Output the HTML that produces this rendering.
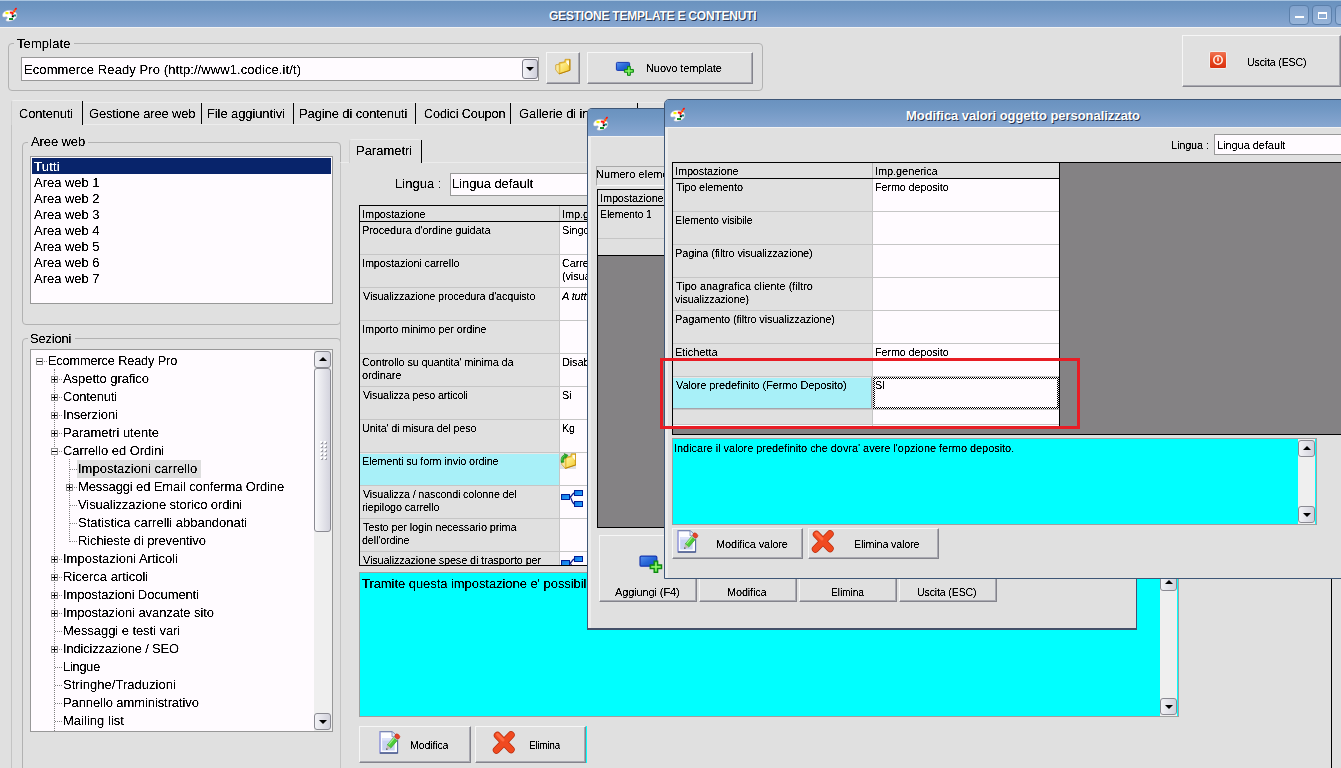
<!DOCTYPE html>
<html><head><meta charset="utf-8"><title>Gestione template e contenuti</title>
<style>
*{box-sizing:border-box;margin:0;padding:0}
html,body{width:1341px;height:768px;overflow:hidden;background:#e0e0e0}
body{font-family:"Liberation Sans",sans-serif;color:#000;position:relative;font-size:11px}
.a{position:absolute}
.x{filter:url(#th)}
.t13{font-size:13px;line-height:16px;white-space:nowrap}
.t11{font-size:11px;line-height:13px;white-space:nowrap}
.tb{background:linear-gradient(to bottom,#6a92bf 0%,#7097c3 30%,#7ea0cb 70%,#88a7d1 100%)}
.btn{position:absolute;background:#e0e0e0;border-top:1px solid #f6f6f6;border-left:1px solid #f6f6f6;border-right:1px solid #84848c;border-bottom:1px solid #84848c;box-shadow:inset -1px -1px 0 #aaaab2}
.gb{position:absolute;border:1px solid #b2b2b2;border-radius:4px}
.gbl{position:absolute;background:#e0e0e0;padding:0 3px;font-size:13px;line-height:16px;white-space:nowrap}
.fld{position:absolute;background:#fffbff;border:1px solid #989898}
.grid{position:absolute;background:#fffbff;overflow:hidden}
.cell{position:absolute;font-size:11px;line-height:13px;white-space:nowrap;overflow:hidden}
.sbtn{position:absolute;width:17px;height:17px;border:1px solid #8a8a92;border-radius:3px;background:linear-gradient(to right,#f2f2f6,#d2d2dc)}
.sbtn:after{content:"";position:absolute;left:4px;width:0;height:0;border-left:4px solid transparent;border-right:4px solid transparent}
.up:after{top:5px;border-bottom:4px solid #000}
.dn:after{top:6px;border-top:4px solid #000}
.trk{position:absolute;background:#efefef}
.tab{position:absolute;font-size:13px;line-height:16px;white-space:nowrap}
.tsep{position:absolute;width:1px;background:#000}
.tr{position:absolute;font-size:13px;line-height:18px;height:18px;white-space:nowrap}
.pm{position:absolute;width:7px;height:7px;border:1px solid #8c8c8c;background:#fffbff}
.pm:before{content:"";position:absolute;left:0;top:2px;width:5px;height:1px;background:#000}
.pm.p:after{content:"";position:absolute;left:2px;top:0;width:1px;height:5px;background:#000}
.dh{position:absolute;height:0;border-top:1px dotted #808080}
.dv{position:absolute;width:0;border-left:1px dotted #808080}
</style></head>
<body>
<svg width="0" height="0" style="position:absolute"><defs><filter id="th" x="0" y="0" width="100%" height="100%" color-interpolation-filters="sRGB"><feComponentTransfer><feFuncA type="linear" slope="3" intercept="-0.8"/></feComponentTransfer></filter></defs></svg>
<div class="a tb" style="left:0;top:0;width:1341px;height:27px;border-top:1px solid #a8c4e0"></div>
<div class="a" style="left:0;top:27px;width:1341px;height:1px;background:#f2f2f2"></div>
<svg class="a" style="left:1px;top:6px" width="18" height="18" viewBox="0 0 18 18">
<path d="M1.5 9.5 C1.5 6 5 4.2 9 4.4 C13.5 4.6 16 6.5 15.8 9.5 C15.6 12.5 12 15 7.5 15.2 C5 15.3 4.2 14.2 5.5 13.2 C7 12 6.5 10.6 5 10.8 C3 11.2 1.5 11 1.5 9.5 Z" fill="#ffffff" stroke="#c8c8d0" stroke-width="0.6"/>
<rect x="4.5" y="6" width="3" height="2.2" fill="#f4f000"/>
<rect x="8.8" y="5.6" width="3" height="2" fill="#ff1010"/>
<rect x="12.5" y="8.5" width="2.6" height="2" fill="#108888"/>
<rect x="8" y="12" width="4" height="2" fill="#109020"/>
<rect x="10.8" y="9.3" width="2" height="2" fill="#000"/>
<path d="M11.3 8 L15 2.6" stroke="#ff1010" stroke-width="1.8" stroke-linecap="round"/>
<path d="M12.4 6.6 L14.2 3.8" stroke="#ffe000" stroke-width="1.2" stroke-dasharray="1.2 1.2"/>
</svg>
<div class="a" style="left:549px;top:8px;font-size:12px;line-height:16px;color:#fff;white-space:nowrap;letter-spacing:-0.223px;font-weight:bold;text-shadow:1px 1px 0 #24324e;">GESTIONE TEMPLATE E CONTENUTI</div>
<div class="a" style="left:1289px;top:5px;width:20px;height:20px;border:1px solid #5c80ab;border-radius:4px;background:linear-gradient(#82a3cd,#98b5d9)"></div>
<div class="a" style="left:1312px;top:5px;width:20px;height:20px;border:1px solid #5c80ab;border-radius:4px;background:linear-gradient(#82a3cd,#98b5d9)"></div>
<div class="a" style="left:1335px;top:5px;width:20px;height:20px;border:1px solid #5c80ab;border-radius:4px;background:linear-gradient(#82a3cd,#98b5d9)"></div>
<div class="a" style="left:1295px;top:16px;width:9px;height:2px;background:#fff"></div>
<div class="a" style="left:1318px;top:12px;width:9px;height:7px;border:1px solid #fff;border-top-width:2px"></div>
<div class="gb" style="left:8px;top:43px;width:755px;height:48px"></div>
<div class="a" style="left:14px;top:40px;width:60px;height:8px;background:#e0e0e0"></div>
<div class="a x" style="left:17px;top:36px;font-size:13px;line-height:16px;white-space:nowrap;letter-spacing:0.105px;">Template</div>
<div class="fld" style="left:21px;top:57px;width:518px;height:24px"></div>
<div class="a x" style="left:24px;top:62px;font-size:13px;line-height:16px;white-space:nowrap;letter-spacing:0.088px;">Ecommerce Ready Pro (http://www1.codice.it/t)</div>
<div class="a" style="left:522px;top:59px;width:16px;height:20px;border:1px solid #7c7c88;border-radius:3px;background:linear-gradient(to right,#f4f4f8,#d0d0dc)"></div>
<div class="a" style="left:526px;top:67px;width:0;height:0;border-left:4px solid transparent;border-right:4px solid transparent;border-top:4px solid #000"></div>
<div class="btn" style="left:546px;top:52px;width:34px;height:32px"></div>
<svg class="a" style="left:554px;top:58px" width="17" height="17" viewBox="0 0 17 17">
<defs><linearGradient id="fg" x1="0" y1="0" x2="1" y2="1"><stop offset="0" stop-color="#fff4a0"/><stop offset="1" stop-color="#f4cc30"/></linearGradient></defs>
<path d="M11.1 1.3 L15.9 1.3 L15.9 12.3 L5.2 15.9 L1.9 11.9 L1.9 6.9 L4.8 6.5 L5.2 4.8 L10.7 3.8 Z" fill="#f0c840" stroke="#c89418" stroke-width="0.7"/>
<path d="M12.3 2.5 L15.0 2.5 L15.0 7.8 L13.6 6.5 L12.3 4.8 Z" fill="#fffbe8"/>
<path d="M6.5 6.1 L11.9 4.8 L13.6 6.5 L14.8 12.3 L6.5 14.8 Z" fill="url(#fg)"/>
<path d="M1.9 6.9 L1.9 11.9 L5.2 15.9 L5.2 6.5 Z" fill="#f8e8a0" stroke="#c89418" stroke-width="0.4"/>
<path d="M15.9 1.3 L15.9 12.3 L5.2 15.9" fill="none" stroke="#b88208" stroke-width="1"/>
</svg>
<div class="btn" style="left:587px;top:52px;width:166px;height:32px"></div>
<svg class="a" style="left:614px;top:60px" width="21" height="17" viewBox="0 0 21 17">
<defs><linearGradient id="bg614" x1="0" y1="0" x2="1" y2="1"><stop offset="0" stop-color="#5c94f0"/><stop offset="0.5" stop-color="#2868d8"/><stop offset="1" stop-color="#1450c8"/></linearGradient></defs>
<rect x="2.4" y="2.4" width="13.2" height="8" rx="1" fill="url(#bg614)" stroke="#1838b0" stroke-width="1"/>
<path d="M13.5 6.35 h2.8 v3.1 h3.1 v2.8 h-3.1 v3.1 h-2.8 v-3.1 h-3.1 v-2.8 h3.1 z" fill="#44cc34" stroke="#0c8810" stroke-width="1"/>
<path d="M14.4 7.4 h1 v3 h3 v1 h-3 v3 h-1 v-3 h-3 v-1 h3 z" fill="#98f870"/>
</svg>
<div class="a x" style="left:646px;top:62px;font-size:11px;line-height:13px;white-space:nowrap;letter-spacing:-0.084px;">Nuovo template</div>
<div class="btn" style="left:1182px;top:35px;width:159px;height:52px"></div>
<svg class="a" style="left:1209px;top:51px" width="18" height="18" viewBox="0 0 18 18">
<defs><linearGradient id="rg" x1="0" y1="0" x2="0" y2="1"><stop offset="0" stop-color="#f07858"/><stop offset="0.5" stop-color="#e84820"/><stop offset="1" stop-color="#d83010"/></linearGradient></defs>
<rect x="0.5" y="0.5" width="17" height="17" rx="1.5" fill="url(#rg)" stroke="#f0f0f0" stroke-width="1"/>
<circle cx="9" cy="9" r="4.2" fill="none" stroke="#fff0e8" stroke-width="1.6"/>
<rect x="8.3" y="6.3" width="1.4" height="4" fill="#fff"/>
</svg>
<div class="a x" style="left:1247px;top:56px;font-size:11px;line-height:13px;white-space:nowrap;letter-spacing:-0.150px;transform:scaleX(0.9610);transform-origin:0 0;">Uscita (ESC)</div>
<div class="a" style="left:11px;top:124px;width:1330px;height:700px;border-left:1px solid #c4c4c4;border-top:1px solid #ececec"></div>
<div class="a" style="left:11px;top:100px;width:71px;height:25px;background:#e0e0e0;border-left:1px solid #d0d0d0;border-top:1px solid #ececec;border-radius:3px 3px 0 0"></div>
<div class="tsep" style="left:82px;top:101px;height:24px"></div>
<div class="a x" style="left:19px;top:106px;font-size:13px;line-height:16px;white-space:nowrap;letter-spacing:-0.150px;transform:scaleX(0.9959);transform-origin:0 0;">Contenuti</div>
<div class="a x" style="left:89px;top:106px;font-size:13px;line-height:16px;white-space:nowrap;letter-spacing:-0.150px;transform:scaleX(0.9976);transform-origin:0 0;">Gestione aree web</div>
<div class="a x" style="left:207px;top:106px;font-size:13px;line-height:16px;white-space:nowrap;letter-spacing:-0.108px;">File aggiuntivi</div>
<div class="a x" style="left:299px;top:106px;font-size:13px;line-height:16px;white-space:nowrap;letter-spacing:-0.118px;">Pagine di contenuti</div>
<div class="a x" style="left:424px;top:106px;font-size:13px;line-height:16px;white-space:nowrap;letter-spacing:-0.150px;transform:scaleX(0.9759);transform-origin:0 0;">Codici Coupon</div>
<div class="a x" style="left:519px;top:106px;font-size:13px;line-height:16px;white-space:nowrap;letter-spacing:-0.141px;">Gallerie di immagini</div>
<div class="tsep" style="left:201px;top:103px;height:21px"></div>
<div class="tsep" style="left:293px;top:103px;height:21px"></div>
<div class="tsep" style="left:415px;top:103px;height:21px"></div>
<div class="tsep" style="left:510px;top:103px;height:21px"></div>
<div class="tsep" style="left:637px;top:103px;height:21px"></div>
<div class="a" style="left:83px;top:102px;width:600px;height:1px;background:#ececec"></div>
<div class="gb" style="left:22px;top:142px;width:319px;height:183px"></div>
<div class="a" style="left:28px;top:139px;width:60px;height:8px;background:#e0e0e0"></div>
<div class="a x" style="left:31px;top:134px;font-size:13px;line-height:16px;white-space:nowrap;letter-spacing:-0.105px;">Aree web</div>
<div class="fld" style="left:30px;top:156px;width:303px;height:148px"></div>
<div class="a" style="left:32px;top:158px;width:299px;height:16px;background:#08246b"></div>
<div class="a x" style="left:34px;top:159px;font-size:13px;line-height:16px;white-space:nowrap;letter-spacing:0.238px;color:#fff;">Tutti</div>
<div class="a x" style="left:34px;top:175px;font-size:13px;line-height:16px;white-space:nowrap;letter-spacing:-0.031px;">Area web 1</div>
<div class="a x" style="left:34px;top:191px;font-size:13px;line-height:16px;white-space:nowrap;letter-spacing:-0.031px;">Area web 2</div>
<div class="a x" style="left:34px;top:207px;font-size:13px;line-height:16px;white-space:nowrap;letter-spacing:-0.031px;">Area web 3</div>
<div class="a x" style="left:34px;top:223px;font-size:13px;line-height:16px;white-space:nowrap;letter-spacing:-0.031px;">Area web 4</div>
<div class="a x" style="left:34px;top:239px;font-size:13px;line-height:16px;white-space:nowrap;letter-spacing:-0.031px;">Area web 5</div>
<div class="a x" style="left:34px;top:255px;font-size:13px;line-height:16px;white-space:nowrap;letter-spacing:-0.031px;">Area web 6</div>
<div class="a x" style="left:34px;top:271px;font-size:13px;line-height:16px;white-space:nowrap;letter-spacing:-0.031px;">Area web 7</div>
<div class="gb" style="left:22px;top:338px;width:319px;height:450px"></div>
<div class="a" style="left:28px;top:335px;width:47px;height:8px;background:#e0e0e0"></div>
<div class="a x" style="left:30px;top:331px;font-size:13px;line-height:16px;white-space:nowrap;letter-spacing:-0.150px;transform:scaleX(0.9879);transform-origin:0 0;">Sezioni</div>
<div class="fld" style="left:30px;top:349px;width:303px;height:383px"></div>
<div class="trk" style="left:314px;top:350px;width:18px;height:381px"></div>
<div class="sbtn up" style="left:314px;top:351px"></div>
<div class="sbtn dn" style="left:314px;top:713px"></div>
<div class="a" style="left:314px;top:368px;width:17px;height:164px;border:1px solid #8a8a92;border-radius:3px;background:linear-gradient(to right,#f8f8fa,#d4d4de)"></div>
<div class="a" style="left:320px;top:441px;width:2px;height:2px;background:#fff;box-shadow:1px 1px 0 #a0a0a8"></div><div class="a" style="left:324px;top:441px;width:2px;height:2px;background:#fff;box-shadow:1px 1px 0 #a0a0a8"></div>
<div class="a" style="left:320px;top:445px;width:2px;height:2px;background:#fff;box-shadow:1px 1px 0 #a0a0a8"></div><div class="a" style="left:324px;top:445px;width:2px;height:2px;background:#fff;box-shadow:1px 1px 0 #a0a0a8"></div>
<div class="a" style="left:320px;top:449px;width:2px;height:2px;background:#fff;box-shadow:1px 1px 0 #a0a0a8"></div><div class="a" style="left:324px;top:449px;width:2px;height:2px;background:#fff;box-shadow:1px 1px 0 #a0a0a8"></div>
<div class="a" style="left:320px;top:453px;width:2px;height:2px;background:#fff;box-shadow:1px 1px 0 #a0a0a8"></div><div class="a" style="left:324px;top:453px;width:2px;height:2px;background:#fff;box-shadow:1px 1px 0 #a0a0a8"></div>
<div class="a" style="left:320px;top:457px;width:2px;height:2px;background:#fff;box-shadow:1px 1px 0 #a0a0a8"></div><div class="a" style="left:324px;top:457px;width:2px;height:2px;background:#fff;box-shadow:1px 1px 0 #a0a0a8"></div>
<div class="dv" style="left:54px;top:369px;height:362px"></div>
<div class="dv" style="left:69px;top:459px;height:83px"></div>
<div class="dh" style="left:40px;top:361px;width:7px"></div>
<div class="pm " style="left:36px;top:358px"></div>
<div class="a x" style="left:48px;top:353px;font-size:13px;line-height:16px;white-space:nowrap;letter-spacing:-0.150px;transform:scaleX(0.9814);transform-origin:0 0;">Ecommerce Ready Pro</div>
<div class="dh" style="left:55px;top:379px;width:7px"></div>
<div class="pm p" style="left:51px;top:376px"></div>
<div class="a x" style="left:63px;top:371px;font-size:13px;line-height:16px;white-space:nowrap;letter-spacing:-0.052px;">Aspetto grafico</div>
<div class="dh" style="left:55px;top:397px;width:7px"></div>
<div class="pm p" style="left:51px;top:394px"></div>
<div class="a x" style="left:63px;top:389px;font-size:13px;line-height:16px;white-space:nowrap;letter-spacing:-0.150px;transform:scaleX(0.9959);transform-origin:0 0;">Contenuti</div>
<div class="dh" style="left:55px;top:415px;width:7px"></div>
<div class="pm p" style="left:51px;top:412px"></div>
<div class="a x" style="left:63px;top:407px;font-size:13px;line-height:16px;white-space:nowrap;letter-spacing:-0.073px;">Inserzioni</div>
<div class="dh" style="left:55px;top:433px;width:7px"></div>
<div class="pm p" style="left:51px;top:430px"></div>
<div class="a x" style="left:63px;top:425px;font-size:13px;line-height:16px;white-space:nowrap;letter-spacing:-0.008px;">Parametri utente</div>
<div class="dh" style="left:55px;top:451px;width:7px"></div>
<div class="pm " style="left:51px;top:448px"></div>
<div class="a x" style="left:63px;top:443px;font-size:13px;line-height:16px;white-space:nowrap;letter-spacing:-0.039px;">Carrello ed Ordini</div>
<div class="a" style="left:77px;top:460px;width:124px;height:18px;background:#dedede"></div>
<div class="dh" style="left:70px;top:469px;width:7px"></div>
<div class="a x" style="left:78px;top:461px;font-size:13px;line-height:16px;white-space:nowrap;letter-spacing:0.000px;">Impostazioni carrello</div>
<div class="dh" style="left:70px;top:487px;width:7px"></div>
<div class="pm p" style="left:66px;top:484px"></div>
<div class="a x" style="left:78px;top:479px;font-size:13px;line-height:16px;white-space:nowrap;letter-spacing:-0.127px;">Messaggi ed Email conferma Ordine</div>
<div class="dh" style="left:70px;top:505px;width:7px"></div>
<div class="a x" style="left:78px;top:497px;font-size:13px;line-height:16px;white-space:nowrap;letter-spacing:-0.086px;">Visualizzazione storico ordini</div>
<div class="dh" style="left:70px;top:523px;width:7px"></div>
<div class="a x" style="left:78px;top:515px;font-size:13px;line-height:16px;white-space:nowrap;letter-spacing:-0.021px;">Statistica carrelli abbandonati</div>
<div class="dh" style="left:70px;top:541px;width:7px"></div>
<div class="a x" style="left:78px;top:533px;font-size:13px;line-height:16px;white-space:nowrap;letter-spacing:-0.129px;">Richieste di preventivo</div>
<div class="dh" style="left:55px;top:559px;width:7px"></div>
<div class="pm p" style="left:51px;top:556px"></div>
<div class="a x" style="left:63px;top:551px;font-size:13px;line-height:16px;white-space:nowrap;letter-spacing:0.005px;">Impostazioni Articoli</div>
<div class="dh" style="left:55px;top:577px;width:7px"></div>
<div class="pm p" style="left:51px;top:574px"></div>
<div class="a x" style="left:63px;top:569px;font-size:13px;line-height:16px;white-space:nowrap;letter-spacing:-0.004px;">Ricerca articoli</div>
<div class="dh" style="left:55px;top:595px;width:7px"></div>
<div class="pm p" style="left:51px;top:592px"></div>
<div class="a x" style="left:63px;top:587px;font-size:13px;line-height:16px;white-space:nowrap;letter-spacing:-0.132px;">Impostazioni Documenti</div>
<div class="dh" style="left:55px;top:613px;width:7px"></div>
<div class="pm p" style="left:51px;top:610px"></div>
<div class="a x" style="left:63px;top:605px;font-size:13px;line-height:16px;white-space:nowrap;letter-spacing:-0.089px;">Impostazioni avanzate sito</div>
<div class="dh" style="left:55px;top:631px;width:7px"></div>
<div class="a x" style="left:63px;top:623px;font-size:13px;line-height:16px;white-space:nowrap;letter-spacing:-0.063px;">Messaggi e testi vari</div>
<div class="dh" style="left:55px;top:649px;width:7px"></div>
<div class="pm p" style="left:51px;top:646px"></div>
<div class="a x" style="left:63px;top:641px;font-size:13px;line-height:16px;white-space:nowrap;letter-spacing:-0.150px;transform:scaleX(0.9904);transform-origin:0 0;">Indicizzazione / SEO</div>
<div class="dh" style="left:55px;top:667px;width:7px"></div>
<div class="a x" style="left:63px;top:659px;font-size:13px;line-height:16px;white-space:nowrap;letter-spacing:-0.150px;transform:scaleX(0.9723);transform-origin:0 0;">Lingue</div>
<div class="dh" style="left:55px;top:685px;width:7px"></div>
<div class="a x" style="left:63px;top:677px;font-size:13px;line-height:16px;white-space:nowrap;letter-spacing:0.040px;">Stringhe/Traduzioni</div>
<div class="dh" style="left:55px;top:703px;width:7px"></div>
<div class="a x" style="left:63px;top:695px;font-size:13px;line-height:16px;white-space:nowrap;letter-spacing:-0.093px;">Pannello amministrativo</div>
<div class="dh" style="left:55px;top:721px;width:7px"></div>
<div class="a x" style="left:63px;top:713px;font-size:13px;line-height:16px;white-space:nowrap;letter-spacing:0.027px;">Mailing list</div>
<div class="a" style="left:340px;top:162px;width:1001px;height:620px;border-left:1px solid #c4c4c4;border-top:1px solid #ececec"></div>
<div class="a" style="left:349px;top:139px;width:72px;height:24px;background:#e0e0e0;border-left:1px solid #d0d0d0;border-top:1px solid #ececec;border-radius:3px 3px 0 0"></div>
<div class="tsep" style="left:421px;top:140px;height:23px"></div>
<div class="a x" style="left:356px;top:143px;font-size:13px;line-height:16px;white-space:nowrap;letter-spacing:-0.014px;">Parametri</div>
<div class="a x" style="left:395px;top:176px;font-size:13px;line-height:16px;white-space:nowrap;letter-spacing:0.031px;">Lingua :</div>
<div class="fld" style="left:450px;top:173px;width:400px;height:23px"></div>
<div class="a x" style="left:452px;top:176px;font-size:13px;line-height:16px;white-space:nowrap;letter-spacing:-0.036px;">Lingua default</div>
<div class="grid" style="left:359px;top:205px;width:520px;height:361px;border:1px solid #000">
<div class="a" style="left:0;top:0;width:520px;height:15px;background:#e0e0e0"></div>
<div class="a" style="left:0;top:15px;width:520px;height:1px;background:#000"></div>
<div class="a x" style="left:2px;top:2px;font-size:11px;line-height:13px;white-space:nowrap;letter-spacing:-0.150px;transform:scaleX(0.9989);transform-origin:0 0;">Impostazione</div><div class="a x" style="left:202px;top:2px;font-size:11px;line-height:13px;white-space:nowrap;letter-spacing:-0.080px;">Imp.generica</div>
<div class="a" style="left:199px;top:0;width:1px;height:15px;background:#b8b8b8"></div>
<div class="a" style="left:0;top:16px;width:199px;height:32px;background:#e0e0e0"></div>
<div class="a" style="left:0;top:48px;width:520px;height:1px;background:#c6c6c6"></div>
<div class="a x" style="left:2px;top:18px;font-size:11px;line-height:13px;white-space:nowrap;letter-spacing:-0.124px;">Procedura d'ordine guidata</div>
<div class="a x" style="left:202px;top:18px;font-size:11px;line-height:13px;white-space:nowrap;letter-spacing:-0.150px;transform:scaleX(0.9967);transform-origin:0 0;">Singola pagina</div>
<div class="a" style="left:0;top:49px;width:199px;height:32px;background:#e0e0e0"></div>
<div class="a" style="left:0;top:81px;width:520px;height:1px;background:#c6c6c6"></div>
<div class="a x" style="left:2px;top:51px;font-size:11px;line-height:13px;white-space:nowrap;letter-spacing:-0.150px;transform:scaleX(0.9959);transform-origin:0 0;">Impostazioni carrello</div>
<div class="a x" style="left:202px;top:51px;font-size:11px;line-height:13px;white-space:nowrap;letter-spacing:-0.150px;transform:scaleX(0.9972);transform-origin:0 0;">Carrello</div><div class="a x" style="left:202px;top:64px;font-size:11px;line-height:13px;white-space:nowrap;letter-spacing:-0.150px;transform:scaleX(0.9992);transform-origin:0 0;">(visualizza</div>
<div class="a" style="left:0;top:82px;width:199px;height:32px;background:#e0e0e0"></div>
<div class="a" style="left:0;top:114px;width:520px;height:1px;background:#c6c6c6"></div>
<div class="a x" style="left:3px;top:84px;font-size:11px;line-height:13px;white-space:nowrap;letter-spacing:-0.150px;transform:scaleX(0.9840);transform-origin:0 0;">Visualizzazione procedura d'acquisto</div>
<div class="a x" style="left:202px;top:84px;font-size:11px;line-height:13px;white-space:nowrap;letter-spacing:-0.139px;"><i>A tutti</i></div>
<div class="a" style="left:0;top:115px;width:199px;height:32px;background:#e0e0e0"></div>
<div class="a" style="left:0;top:147px;width:520px;height:1px;background:#c6c6c6"></div>
<div class="a x" style="left:2px;top:117px;font-size:11px;line-height:13px;white-space:nowrap;letter-spacing:-0.150px;transform:scaleX(0.9973);transform-origin:0 0;">Importo minimo per ordine</div>
<div class="a" style="left:0;top:148px;width:199px;height:32px;background:#e0e0e0"></div>
<div class="a" style="left:0;top:180px;width:520px;height:1px;background:#c6c6c6"></div>
<div class="a x" style="left:2px;top:150px;font-size:11px;line-height:13px;white-space:nowrap;letter-spacing:-0.150px;transform:scaleX(0.9969);transform-origin:0 0;">Controllo su quantita' minima da</div><div class="a x" style="left:2px;top:163px;font-size:11px;line-height:13px;white-space:nowrap;letter-spacing:-0.125px;">ordinare</div>
<div class="a x" style="left:202px;top:150px;font-size:11px;line-height:13px;white-space:nowrap;letter-spacing:-0.147px;">Disabilitato</div>
<div class="a" style="left:0;top:181px;width:199px;height:32px;background:#e0e0e0"></div>
<div class="a" style="left:0;top:213px;width:520px;height:1px;background:#c6c6c6"></div>
<div class="a x" style="left:3px;top:183px;font-size:11px;line-height:13px;white-space:nowrap;letter-spacing:-0.150px;transform:scaleX(0.9753);transform-origin:0 0;">Visualizza peso articoli</div>
<div class="a x" style="left:202px;top:183px;font-size:11px;line-height:13px;white-space:nowrap;letter-spacing:-0.150px;transform:scaleX(0.9851);transform-origin:0 0;">Si</div>
<div class="a" style="left:0;top:214px;width:199px;height:32px;background:#e0e0e0"></div>
<div class="a" style="left:0;top:246px;width:520px;height:1px;background:#c6c6c6"></div>
<div class="a x" style="left:2px;top:216px;font-size:11px;line-height:13px;white-space:nowrap;letter-spacing:-0.150px;transform:scaleX(0.9824);transform-origin:0 0;">Unita' di misura del peso</div>
<div class="a x" style="left:202px;top:216px;font-size:11px;line-height:13px;white-space:nowrap;letter-spacing:-0.150px;transform:scaleX(0.9809);transform-origin:0 0;">Kg</div>
<div class="a" style="left:0;top:247px;width:199px;height:32px;background:#a8f0f8"></div>
<div class="a" style="left:0;top:247px;width:199px;height:1px;background:#e8e8e8"></div>
<div class="a" style="left:0;top:279px;width:520px;height:1px;background:#c6c6c6"></div>
<div class="a x" style="left:2px;top:249px;font-size:11px;line-height:13px;white-space:nowrap;letter-spacing:-0.150px;transform:scaleX(0.9931);transform-origin:0 0;">Elementi su form invio ordine</div>
<svg class="a" style="left:200px;top:247px" width="16" height="16" viewBox="0 0 16 16">
<rect width="16" height="16" fill="#e0e0e0"/>
<path d="M11.2 0.8 L16.0 0.8 L16.0 11.8 L5.3 15.4 L2.0 11.4 L2.0 6.4 L4.9 6.0 L5.3 4.3 L10.8 3.3 Z" fill="#f0c840" stroke="#c89418" stroke-width="0.7"/>
<path d="M12.4 2.0 L15.1 2.0 L15.1 7.2 L13.7 6.0 L12.4 4.3 Z" fill="#fffbe8"/>
<path d="M6.6 5.6 L12.0 4.3 L13.7 6.0 L14.9 11.8 L6.6 14.3 Z" fill="url(#fg)"/>
<path d="M2.0 6.4 L2.0 11.4 L5.3 15.4 L5.3 6.0 Z" fill="#f8e8a0" stroke="#c89418" stroke-width="0.4"/>
<path d="M16.0 0.8 L16.0 11.8 L5.3 15.4" fill="none" stroke="#b88208" stroke-width="1"/>
<path d="M1.2 9.5 C0.4 5.5 1.8 2.8 4.6 1.8 L4.2 0.6 L8 2.2 L5.6 5.4 L5.2 4.2 C3.8 5 3.3 6.8 3.9 9.2 Z" fill="#28a828" stroke="#0c7c0c" stroke-width="0.5"/>
<path d="M1.8 7.5 C1.6 5 2.6 3.4 4.6 2.6" fill="none" stroke="#70e070" stroke-width="0.8"/>
</svg>
<div class="a" style="left:0;top:280px;width:199px;height:32px;background:#e0e0e0"></div>
<div class="a" style="left:0;top:312px;width:520px;height:1px;background:#c6c6c6"></div>
<div class="a x" style="left:3px;top:282px;font-size:11px;line-height:13px;white-space:nowrap;letter-spacing:-0.150px;transform:scaleX(0.9783);transform-origin:0 0;">Visualizza / nascondi colonne del</div><div class="a x" style="left:2px;top:295px;font-size:11px;line-height:13px;white-space:nowrap;letter-spacing:-0.150px;transform:scaleX(0.9914);transform-origin:0 0;">riepilogo carrello</div>
<svg class="a" style="left:201px;top:284px" width="23" height="18" viewBox="0 0 23 18">
<defs><linearGradient id="tg" x1="0" y1="0" x2="1" y2="1"><stop offset="0" stop-color="#0c70e0"/><stop offset="1" stop-color="#28a4ff"/></linearGradient></defs>
<path d="M9 7 C11 6.5 11 3.5 13.5 3 M9 7 C11 8 10.5 13.5 13.5 14" fill="none" stroke="#101c88" stroke-width="1.3"/>
<rect x="0.5" y="4.5" width="8" height="5" fill="url(#tg)" stroke="#001c94"/>
<rect x="13.5" y="0.5" width="8" height="5" fill="url(#tg)" stroke="#001c94"/>
<rect x="13.5" y="11.5" width="8" height="5" fill="url(#tg)" stroke="#001c94"/>
</svg>
<div class="a" style="left:0;top:313px;width:199px;height:32px;background:#e0e0e0"></div>
<div class="a" style="left:0;top:345px;width:520px;height:1px;background:#c6c6c6"></div>
<div class="a x" style="left:3px;top:315px;font-size:11px;line-height:13px;white-space:nowrap;letter-spacing:-0.150px;transform:scaleX(0.9998);transform-origin:0 0;">Testo per login necessario prima</div><div class="a x" style="left:2px;top:328px;font-size:11px;line-height:13px;white-space:nowrap;letter-spacing:-0.150px;transform:scaleX(0.9832);transform-origin:0 0;">dell'ordine</div>
<div class="a" style="left:0;top:346px;width:199px;height:32px;background:#e0e0e0"></div>
<div class="a" style="left:0;top:378px;width:520px;height:1px;background:#c6c6c6"></div>
<div class="a x" style="left:3px;top:348px;font-size:11px;line-height:13px;white-space:nowrap;letter-spacing:-0.150px;transform:scaleX(0.9924);transform-origin:0 0;">Visualizzazione spese di trasporto per</div>
<svg class="a" style="left:201px;top:350px" width="23" height="18" viewBox="0 0 23 18">
<defs><linearGradient id="tg" x1="0" y1="0" x2="1" y2="1"><stop offset="0" stop-color="#0c70e0"/><stop offset="1" stop-color="#28a4ff"/></linearGradient></defs>
<path d="M9 7 C11 6.5 11 3.5 13.5 3 M9 7 C11 8 10.5 13.5 13.5 14" fill="none" stroke="#101c88" stroke-width="1.3"/>
<rect x="0.5" y="4.5" width="8" height="5" fill="url(#tg)" stroke="#001c94"/>
<rect x="13.5" y="0.5" width="8" height="5" fill="url(#tg)" stroke="#001c94"/>
<rect x="13.5" y="11.5" width="8" height="5" fill="url(#tg)" stroke="#001c94"/>
</svg>
<div class="a" style="left:199px;top:16px;width:1px;height:360px;background:#c6c6c6"></div>
</div>
<div class="a" style="left:359px;top:572px;width:820px;height:145px;background:#00ffff;border:1px solid #a0a0a0"></div>
<div class="a x" style="left:362px;top:576px;font-size:13px;line-height:16px;white-space:nowrap;letter-spacing:-0.059px;">Tramite questa impostazione e' possibile</div>
<div class="trk" style="left:1160px;top:573px;width:17px;height:143px"></div>
<div class="sbtn up" style="left:1160px;top:574px"></div>
<div class="sbtn dn" style="left:1160px;top:698px"></div>
<div class="btn" style="left:359px;top:726px;width:112px;height:37px"></div>
<svg class="a" style="left:379px;top:731px" width="22" height="23" viewBox="0 0 22 23">
<path d="M1 0.8 H13 L18.6 5.8 V22 H1 Z" fill="#fdfdff" stroke="#5466a0" stroke-width="1.1"/>
<path d="M1 0.8 V22" stroke="#b0b0f0" stroke-width="1.2"/>
<path d="M1 22 H18.6" stroke="#3c4e84" stroke-width="1.2"/>
<rect x="3.2" y="7" width="12.5" height="12.5" fill="#c8d2f2"/>
<rect x="3.2" y="7" width="12.5" height="2.6" fill="#dde3fa"/>
<path d="M13 0.8 L13 5.8 L18.6 5.8" fill="#e4eafa" stroke="#7486b8" stroke-width="0.8"/>
<path d="M8.2 14.1 L14.7 6.5 L18.2 9.5 L11.7 17.1 Z" fill="#4ccc38" stroke="#2c9c1c" stroke-width="0.7"/>
<path d="M9.6 13.6 L15.4 6.9" stroke="#a4f490" stroke-width="1.3"/>
<path d="M14.7 6.5 L15.7 5.4 L19.2 8.4 L18.2 9.5 Z" fill="#b4b4bc"/>
<ellipse cx="18.3" cy="5.4" rx="2.7" ry="2.2" transform="rotate(40 18.3 5.4)" fill="#e64428" stroke="#b83018" stroke-width="0.5"/>
<path d="M8.2 14.1 L7 19 L11.7 17.1 Z" fill="#c4bcb4"/>
<path d="M7 19 L7.5 17 L9 18.2 Z" fill="#505050"/>
</svg>
<div class="a x" style="left:410px;top:739px;font-size:11px;line-height:13px;white-space:nowrap;letter-spacing:-0.150px;transform:scaleX(0.9645);transform-origin:0 0;">Modifica</div>
<div class="btn" style="left:475px;top:726px;width:111px;height:37px"></div>
<svg class="a" style="left:492px;top:731px" width="24" height="24" viewBox="0 0 24 24">
<g fill="none" stroke-linecap="round">
<path d="M5.5 4.5 L19 18.5 M19 4 L4.5 19" stroke="#b82c0c" stroke-width="7.4"/>
<path d="M5.5 4.5 L19 18.5 M19 4 L4.5 19" stroke="#f04a20" stroke-width="6"/>
<path d="M5.5 3.5 L11 9" stroke="#ff6a40" stroke-width="3"/>
</g></svg>
<div class="a x" style="left:529px;top:739px;font-size:11px;line-height:13px;white-space:nowrap;letter-spacing:-0.150px;transform:scaleX(0.8902);transform-origin:0 0;">Elimina</div>
<div class="a" style="left:586px;top:726px;width:1px;height:37px;background:#00ffff"></div>
<div class="a" style="left:1331px;top:579px;width:1px;height:189px;background:#000"></div>
<div class="a" style="left:587px;top:108px;width:550px;height:522px;background:#e0e0e0;border:1px solid #3e5676;border-bottom:2px solid #445068;border-radius:5px 5px 0 0;overflow:hidden">
<div class="a tb" style="left:0;top:0;width:550px;height:27px"></div><div class="a" style="left:0;top:27px;width:550px;height:1px;background:#f2f2f2"></div><div class="a" style="left:0;top:27px;width:3px;height:500px;background:#ececec"></div>
<svg class="a" style="left:4px;top:6px" width="18" height="18" viewBox="0 0 18 18">
<path d="M1.5 9.5 C1.5 6 5 4.2 9 4.4 C13.5 4.6 16 6.5 15.8 9.5 C15.6 12.5 12 15 7.5 15.2 C5 15.3 4.2 14.2 5.5 13.2 C7 12 6.5 10.6 5 10.8 C3 11.2 1.5 11 1.5 9.5 Z" fill="#ffffff" stroke="#c8c8d0" stroke-width="0.6"/>
<rect x="4.5" y="6" width="3" height="2.2" fill="#f4f000"/>
<rect x="8.8" y="5.6" width="3" height="2" fill="#ff1010"/>
<rect x="12.5" y="8.5" width="2.6" height="2" fill="#108888"/>
<rect x="8" y="12" width="4" height="2" fill="#109020"/>
<rect x="10.8" y="9.3" width="2" height="2" fill="#000"/>
<path d="M11.3 8 L15 2.6" stroke="#ff1010" stroke-width="1.8" stroke-linecap="round"/>
<path d="M12.4 6.6 L14.2 3.8" stroke="#ffe000" stroke-width="1.2" stroke-dasharray="1.2 1.2"/>
</svg>
<div class="a" style="left:8px;top:57px;width:200px;height:20px;border:1px solid #a8a8a8;border-right-color:#f8f8f8;border-bottom-color:#f8f8f8"></div>
<div class="a x" style="left:8px;top:59px;font-size:11px;line-height:13px;white-space:nowrap;letter-spacing:0.051px;">Numero elementi</div>
<div class="a" style="left:9px;top:80px;width:400px;height:339px;background:#848284;border:1px solid #000"></div>
<div class="a" style="left:10px;top:81px;width:400px;height:16px;background:#e0e0e0;border-bottom:1px solid #000"></div>
<div class="a x" style="left:12px;top:83px;font-size:11px;line-height:13px;white-space:nowrap;letter-spacing:-0.150px;transform:scaleX(0.9989);transform-origin:0 0;">Impostazione</div>
<div class="a" style="left:10px;top:97px;width:400px;height:33px;background:#e0e0e0;border-bottom:1px solid #c6c6c6"></div>
<div class="a x" style="left:12px;top:99px;font-size:11px;line-height:13px;white-space:nowrap;letter-spacing:-0.150px;transform:scaleX(0.9570);transform-origin:0 0;">Elemento 1</div>
<div class="a" style="left:10px;top:130px;width:400px;height:17px;background:#e0e0e0;border-bottom:1px solid #000"></div>
<div class="btn" style="left:11px;top:426px;width:98px;height:67px"></div>
<svg class="a" style="left:49px;top:444px" width="26.67" height="21.59" viewBox="0 0 21 17">
<defs><linearGradient id="bg49" x1="0" y1="0" x2="1" y2="1"><stop offset="0" stop-color="#5c94f0"/><stop offset="0.5" stop-color="#2868d8"/><stop offset="1" stop-color="#1450c8"/></linearGradient></defs>
<rect x="2.4" y="2.4" width="13.2" height="8" rx="1" fill="url(#bg49)" stroke="#1838b0" stroke-width="1"/>
<path d="M13.5 6.35 h2.8 v3.1 h3.1 v2.8 h-3.1 v3.1 h-2.8 v-3.1 h-3.1 v-2.8 h3.1 z" fill="#44cc34" stroke="#0c8810" stroke-width="1"/>
<path d="M14.4 7.4 h1 v3 h3 v1 h-3 v3 h-1 v-3 h-3 v-1 h3 z" fill="#98f870"/>
</svg>
<div class="a x" style="left:27px;top:477px;font-size:11px;line-height:13px;white-space:nowrap;letter-spacing:-0.114px;">Aggiungi (F4)</div>
<div class="btn" style="left:111px;top:427px;width:98px;height:66px"></div>
<div class="a x" style="left:139px;top:477px;font-size:11px;line-height:13px;white-space:nowrap;letter-spacing:-0.150px;transform:scaleX(0.9945);transform-origin:0 0;">Modifica</div>
<div class="btn" style="left:211px;top:427px;width:98px;height:66px"></div>
<div class="a x" style="left:243px;top:477px;font-size:11px;line-height:13px;white-space:nowrap;letter-spacing:-0.150px;transform:scaleX(0.9385);transform-origin:0 0;">Elimina</div>
<div class="btn" style="left:311px;top:427px;width:98px;height:66px"></div>
<div class="a x" style="left:329px;top:477px;font-size:11px;line-height:13px;white-space:nowrap;letter-spacing:-0.150px;transform:scaleX(0.9626);transform-origin:0 0;">Uscita (ESC)</div>
</div>
<div class="a" style="left:664px;top:99px;width:700px;height:480px;background:#e0e0e0;border:1px solid #3e5676;border-radius:5px 5px 0 0;overflow:hidden">
<div class="a tb" style="left:0;top:0;width:700px;height:27px"></div><div class="a" style="left:0;top:27px;width:700px;height:1px;background:#f2f2f2"></div><div class="a" style="left:0;top:27px;width:3px;height:500px;background:#ececec"></div>
<svg class="a" style="left:4px;top:6px" width="18" height="18" viewBox="0 0 18 18">
<path d="M1.5 9.5 C1.5 6 5 4.2 9 4.4 C13.5 4.6 16 6.5 15.8 9.5 C15.6 12.5 12 15 7.5 15.2 C5 15.3 4.2 14.2 5.5 13.2 C7 12 6.5 10.6 5 10.8 C3 11.2 1.5 11 1.5 9.5 Z" fill="#ffffff" stroke="#c8c8d0" stroke-width="0.6"/>
<rect x="4.5" y="6" width="3" height="2.2" fill="#f4f000"/>
<rect x="8.8" y="5.6" width="3" height="2" fill="#ff1010"/>
<rect x="12.5" y="8.5" width="2.6" height="2" fill="#108888"/>
<rect x="8" y="12" width="4" height="2" fill="#109020"/>
<rect x="10.8" y="9.3" width="2" height="2" fill="#000"/>
<path d="M11.3 8 L15 2.6" stroke="#ff1010" stroke-width="1.8" stroke-linecap="round"/>
<path d="M12.4 6.6 L14.2 3.8" stroke="#ffe000" stroke-width="1.2" stroke-dasharray="1.2 1.2"/>
</svg>
<div class="a" style="left:241px;top:8px;font-size:13px;line-height:16px;color:#fff;white-space:nowrap;letter-spacing:-0.059px;font-weight:bold;text-shadow:1px 1px 0 #24324e;">Modifica valori oggetto personalizzato</div>
<div class="a x" style="left:506px;top:39px;font-size:11px;line-height:13px;white-space:nowrap;letter-spacing:-0.150px;transform:scaleX(0.9964);transform-origin:0 0;">Lingua :</div>
<div class="fld" style="left:549px;top:34px;width:200px;height:21px"></div>
<div class="a x" style="left:552px;top:39px;font-size:11px;line-height:13px;white-space:nowrap;letter-spacing:-0.053px;">Lingua default</div>
<div class="a" style="left:7px;top:62px;width:700px;height:273px;background:#848284;border-top:1px solid #000;border-bottom:1px solid #000;border-left:1px solid #000"></div>
<div class="a" style="left:8px;top:63px;width:387px;height:263px;background:#fffbff;border-right:1px solid #000">
<div class="a" style="left:0;top:0;width:386px;height:15px;background:#e0e0e0"></div>
<div class="a" style="left:0;top:15px;width:386px;height:1px;background:#000"></div>
<div class="a" style="left:199px;top:0;width:1px;height:15px;background:#b8b8b8"></div>
<div class="a x" style="left:2px;top:2px;font-size:11px;line-height:13px;white-space:nowrap;letter-spacing:-0.150px;transform:scaleX(0.9989);transform-origin:0 0;">Impostazione</div><div class="a x" style="left:202px;top:2px;font-size:11px;line-height:13px;white-space:nowrap;letter-spacing:-0.080px;">Imp.generica</div>
<div class="a" style="left:0;top:16px;width:199px;height:32px;background:#e0e0e0"></div>
<div class="a" style="left:0;top:48px;width:386px;height:1px;background:#c6c6c6"></div>
<div class="a x" style="left:3px;top:18px;font-size:11px;line-height:13px;white-space:nowrap;letter-spacing:-0.150px;transform:scaleX(0.9919);transform-origin:0 0;">Tipo elemento</div>
<div class="a x" style="left:202px;top:18px;font-size:11px;line-height:13px;white-space:nowrap;letter-spacing:-0.150px;transform:scaleX(0.9897);transform-origin:0 0;">Fermo deposito</div>
<div class="a" style="left:0;top:49px;width:199px;height:32px;background:#e0e0e0"></div>
<div class="a" style="left:0;top:81px;width:386px;height:1px;background:#c6c6c6"></div>
<div class="a x" style="left:2px;top:51px;font-size:11px;line-height:13px;white-space:nowrap;letter-spacing:-0.150px;transform:scaleX(0.9699);transform-origin:0 0;">Elemento visibile</div>
<div class="a" style="left:0;top:82px;width:199px;height:32px;background:#e0e0e0"></div>
<div class="a" style="left:0;top:114px;width:386px;height:1px;background:#c6c6c6"></div>
<div class="a x" style="left:2px;top:84px;font-size:11px;line-height:13px;white-space:nowrap;letter-spacing:-0.150px;transform:scaleX(0.9982);transform-origin:0 0;">Pagina (filtro visualizzazione)</div>
<div class="a" style="left:0;top:115px;width:199px;height:32px;background:#e0e0e0"></div>
<div class="a" style="left:0;top:147px;width:386px;height:1px;background:#c6c6c6"></div>
<div class="a x" style="left:3px;top:117px;font-size:11px;line-height:13px;white-space:nowrap;letter-spacing:-0.028px;">Tipo anagrafica cliente (filtro</div><div class="a x" style="left:2px;top:130px;font-size:11px;line-height:13px;white-space:nowrap;letter-spacing:-0.150px;transform:scaleX(0.9814);transform-origin:0 0;">visualizzazione)</div>
<div class="a" style="left:0;top:148px;width:199px;height:32px;background:#e0e0e0"></div>
<div class="a" style="left:0;top:180px;width:386px;height:1px;background:#c6c6c6"></div>
<div class="a x" style="left:2px;top:150px;font-size:11px;line-height:13px;white-space:nowrap;letter-spacing:-0.137px;">Pagamento (filtro visualizzazione)</div>
<div class="a" style="left:0;top:181px;width:199px;height:32px;background:#e0e0e0"></div>
<div class="a" style="left:0;top:213px;width:386px;height:1px;background:#c6c6c6"></div>
<div class="a x" style="left:2px;top:183px;font-size:11px;line-height:13px;white-space:nowrap;letter-spacing:-0.012px;">Etichetta</div>
<div class="a x" style="left:202px;top:183px;font-size:11px;line-height:13px;white-space:nowrap;letter-spacing:-0.150px;transform:scaleX(0.9897);transform-origin:0 0;">Fermo deposito</div>
<div class="a" style="left:0;top:214px;width:199px;height:32px;background:#a8f0f8"></div>
<div class="a" style="left:0;top:246px;width:386px;height:1px;background:#c6c6c6"></div>
<div class="a" style="left:200px;top:214px;width:186px;height:32px;background:repeating-conic-gradient(#000 0% 25%,#fffbff 0% 50%) 0 0/2px 2px"><div class="a" style="left:2px;top:2px;right:2px;bottom:2px;background:#fffbff"></div></div>
<div class="a" style="left:0;top:245px;width:199px;height:1px;background:#a4a4ac"></div>
<div class="a" style="left:0;top:214px;width:199px;height:1px;background:#e8e8e8"></div>
<div class="a" style="left:198px;top:214px;width:1px;height:32px;background:#a4a4ac"></div>
<div class="a x" style="left:3px;top:216px;font-size:11px;line-height:13px;white-space:nowrap;letter-spacing:-0.098px;">Valore predefinito (Fermo Deposito)</div>
<div class="a x" style="left:202px;top:216px;font-size:11px;line-height:13px;white-space:nowrap;letter-spacing:-0.150px;transform:scaleX(0.9842);transform-origin:0 0;">SI</div>
<div class="a" style="left:0;top:247px;width:199px;height:14px;background:#e0e0e0"></div>
<div class="a" style="left:0;top:261px;width:386px;height:1px;background:#c6c6c6"></div>
<div class="a" style="left:199px;top:16px;width:1px;height:247px;background:#c6c6c6"></div>
</div>
<div class="a" style="left:7px;top:338px;width:645px;height:87px;background:#00ffff;border:1px solid #a0a0a0"></div>
<div class="a x" style="left:9px;top:342px;font-size:11px;line-height:13px;white-space:nowrap;letter-spacing:-0.046px;">Indicare il valore predefinito che dovra' avere l'opzione fermo deposito.</div>
<div class="trk" style="left:633px;top:339px;width:17px;height:85px"></div>
<div class="sbtn up" style="left:633px;top:340px"></div>
<div class="sbtn dn" style="left:633px;top:406px"></div>
<div class="btn" style="left:7px;top:428px;width:131px;height:31px"></div>
<svg class="a" style="left:12px;top:430px" width="22" height="23" viewBox="0 0 22 23">
<path d="M1 0.8 H13 L18.6 5.8 V22 H1 Z" fill="#fdfdff" stroke="#5466a0" stroke-width="1.1"/>
<path d="M1 0.8 V22" stroke="#b0b0f0" stroke-width="1.2"/>
<path d="M1 22 H18.6" stroke="#3c4e84" stroke-width="1.2"/>
<rect x="3.2" y="7" width="12.5" height="12.5" fill="#c8d2f2"/>
<rect x="3.2" y="7" width="12.5" height="2.6" fill="#dde3fa"/>
<path d="M13 0.8 L13 5.8 L18.6 5.8" fill="#e4eafa" stroke="#7486b8" stroke-width="0.8"/>
<path d="M8.2 14.1 L14.7 6.5 L18.2 9.5 L11.7 17.1 Z" fill="#4ccc38" stroke="#2c9c1c" stroke-width="0.7"/>
<path d="M9.6 13.6 L15.4 6.9" stroke="#a4f490" stroke-width="1.3"/>
<path d="M14.7 6.5 L15.7 5.4 L19.2 8.4 L18.2 9.5 Z" fill="#b4b4bc"/>
<ellipse cx="18.3" cy="5.4" rx="2.7" ry="2.2" transform="rotate(40 18.3 5.4)" fill="#e64428" stroke="#b83018" stroke-width="0.5"/>
<path d="M8.2 14.1 L7 19 L11.7 17.1 Z" fill="#c4bcb4"/>
<path d="M7 19 L7.5 17 L9 18.2 Z" fill="#505050"/>
</svg>
<div class="a x" style="left:51px;top:438px;font-size:11px;line-height:13px;white-space:nowrap;letter-spacing:-0.143px;">Modifica valore</div>
<div class="btn" style="left:143px;top:428px;width:131px;height:31px"></div>
<svg class="a" style="left:146px;top:430px" width="24" height="24" viewBox="0 0 24 24">
<g fill="none" stroke-linecap="round">
<path d="M5.5 4.5 L19 18.5 M19 4 L4.5 19" stroke="#b82c0c" stroke-width="7.4"/>
<path d="M5.5 4.5 L19 18.5 M19 4 L4.5 19" stroke="#f04a20" stroke-width="6"/>
<path d="M5.5 3.5 L11 9" stroke="#ff6a40" stroke-width="3"/>
</g></svg>
<div class="a x" style="left:189px;top:438px;font-size:11px;line-height:13px;white-space:nowrap;letter-spacing:-0.150px;transform:scaleX(0.9770);transform-origin:0 0;">Elimina valore</div>
</div>
<div class="a" style="left:660px;top:358px;width:420px;height:71px;border:3px solid #e81c24"></div>
</body></html>
